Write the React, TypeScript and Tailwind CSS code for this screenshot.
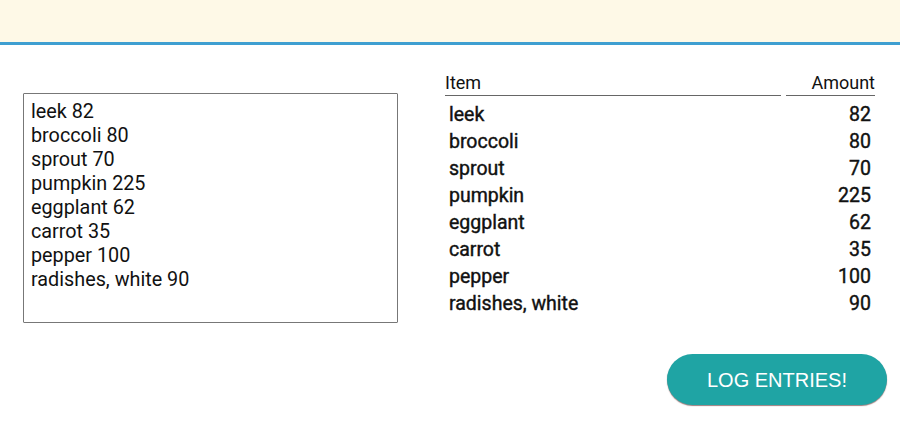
import React from 'react';

const entries: [string, number][] = [
  ['leek', 82],
  ['broccoli', 80],
  ['sprout', 70],
  ['pumpkin', 225],
  ['eggplant', 62],
  ['carrot', 35],
  ['pepper', 100],
  ['radishes, white', 90],
];

const App: React.FC = () => {
  const text = entries.map(([name, amount]) => `${name} ${amount}`).join('\n');

  return (
    <div className="w-[900px] h-[427px] bg-white overflow-hidden font-['Roboto',sans-serif] text-[#111]">
      {/* top bar */}
      <div className="h-[45px] bg-[#fef9e7] border-b-[3px] border-[#3f9fd1]"></div>

      <div className="flex">
        {/* input area */}
        <div className="pl-[23px] pt-[48px]">
          <textarea
            readOnly
            value={text}
            className="block w-[375px] h-[230px] border border-[#777] rounded-[1px] px-[7px] pt-[6px] text-[19.8px] leading-[24px] text-[#111] resize-none outline-none font-['Roboto',sans-serif]"
          />
        </div>

        {/* parsed table */}
        <div className="ml-[47px] pt-[28px]">
          <div className="grid grid-cols-[336px_89px] gap-x-[5px]">
            <div className="text-[18px] leading-[20px] pb-[2px] border-b border-[#666]">Item</div>
            <div className="text-[18px] leading-[20px] pb-[2px] border-b border-[#666] text-right">Amount</div>
          </div>
          <div className="grid grid-cols-[336px_89px] gap-x-[5px] pt-[5px] [-webkit-text-stroke:0.4px_#111]">
            {entries.map(([name, amount]) => (
              <React.Fragment key={name}>
                <div className="pl-1 text-[19.5px] leading-[27px]">{name}</div>
                <div className="pr-1 text-[19.5px] leading-[27px] text-right">{amount}</div>
              </React.Fragment>
            ))}
          </div>
        </div>
      </div>

      <div className="flex justify-end pr-[13px] pt-[31px]">
        <button className="w-[220px] h-[51px] rounded-full bg-[#1fa4a4] text-white text-[20px] font-['Liberation_Sans',sans-serif] shadow-[0_1px_1px_rgba(90,40,40,0.6)]">
          LOG ENTRIES!
        </button>
      </div>
    </div>
  );
};

export default App;
